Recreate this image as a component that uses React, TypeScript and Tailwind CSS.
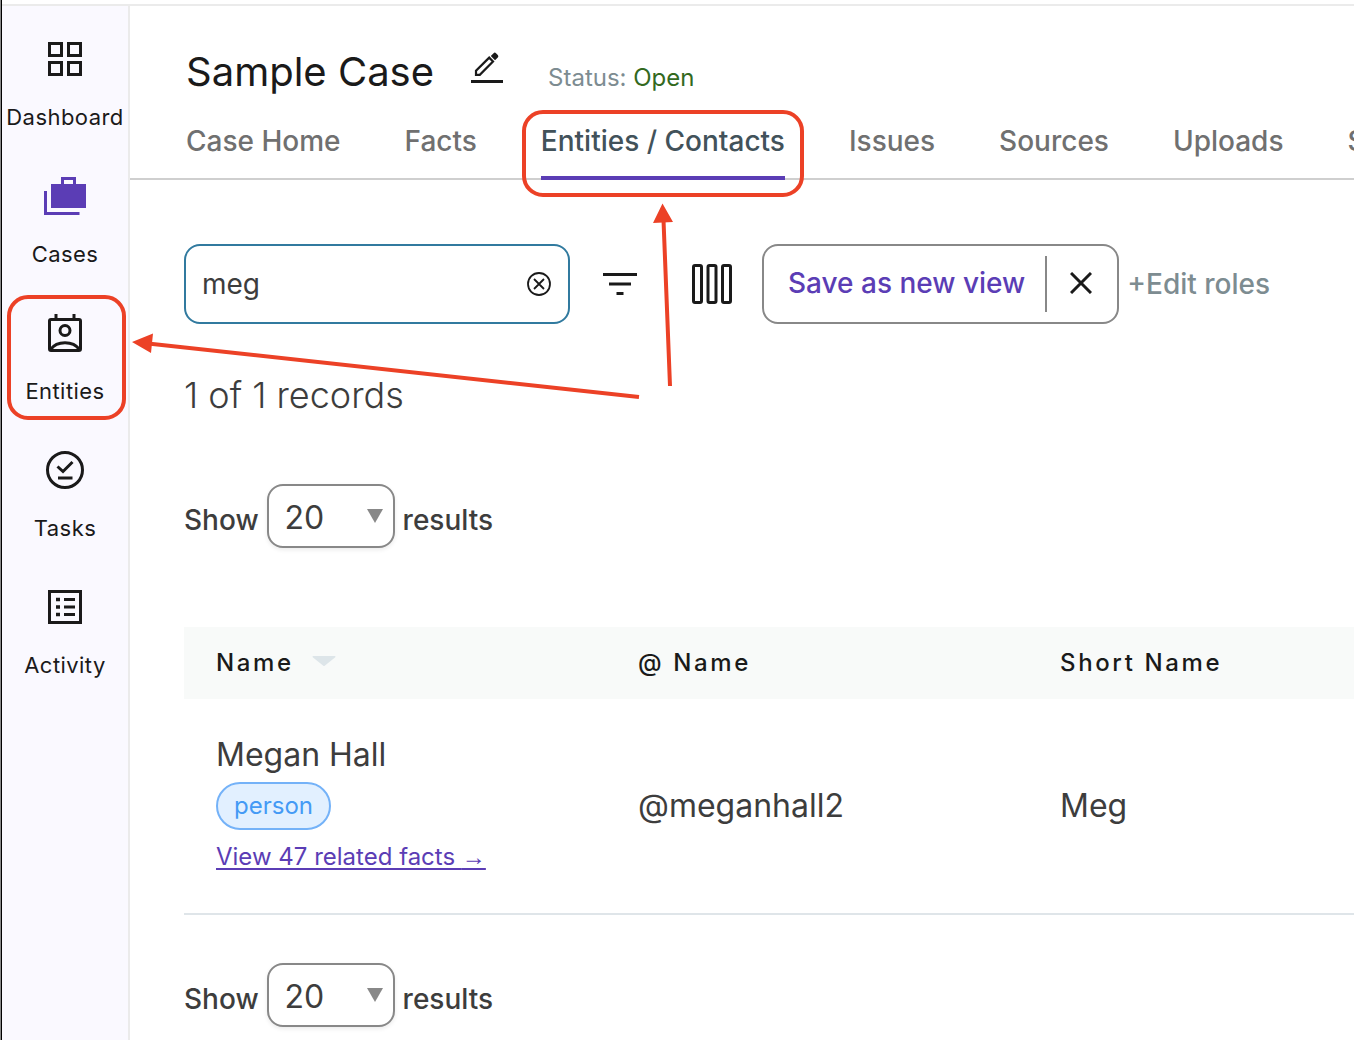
import React from "react";

const navItems = [
  { label: "Dashboard", icon: <DashboardIcon /> },
  { label: "Cases", icon: <CasesIcon /> },
  { label: "Entities", icon: <EntitiesIcon /> },
  { label: "Tasks", icon: <TasksIcon /> },
  { label: "Activity", icon: <ActivityIcon /> },
];

const tabs = ["Case Home", "Facts", "Entities / Contacts", "Issues", "Sources", "Uploads", "Settings"];

function DashboardIcon() {
  return (
    <svg width="48" height="48" viewBox="0 0 48 48" fill="none" stroke="currentColor" strokeWidth="3" aria-hidden="true">
      <rect x="8.500" y="8.500" width="12" height="12" />
      <rect x="27.500" y="8.500" width="12" height="12" />
      <rect x="8.500" y="27.500" width="12" height="12" />
      <rect x="27.500" y="27.500" width="12" height="12" />
    </svg>
  );
}

function CasesIcon() {
  return (
    <svg width="48" height="48" viewBox="0 0 48 48" fill="#5b3db5" aria-hidden="true">
      <path d="M3 19H6V40H38.500V43H3Z" />
      <path fillRule="evenodd" d="M10 12H20V5H35V12H45V36H10ZM23 8V12H32V8Z" />
    </svg>
  );
}

function EntitiesIcon() {
  return (
    <svg width="48" height="48" viewBox="0 0 48 48" fill="none" stroke="currentColor" strokeWidth="3" aria-hidden="true">
      <path d="M15 5V11M33 5V11" />
      <rect x="8.500" y="10.500" width="31" height="31" rx="1.500" />
      <circle cx="24" cy="21.500" r="5" />
      <path d="M9.500 40.500C16 31.500 32 31.500 38.500 40.500" />
    </svg>
  );
}

function TasksIcon() {
  return (
    <svg width="48" height="48" viewBox="0 0 48 48" fill="none" stroke="currentColor" strokeWidth="3" aria-hidden="true">
      <circle cx="24" cy="24" r="17.500" />
      <path d="M16.500 20.500L22 25.500L31.500 16M17 32H31.500" />
    </svg>
  );
}

function ActivityIcon() {
  return (
    <svg width="48" height="48" viewBox="0 0 48 48" fill="none" stroke="currentColor" strokeWidth="3" aria-hidden="true">
      <rect x="8.500" y="8.500" width="31" height="31" />
      <path d="M15 16.500H19M15 24H19M15 31.500H19" strokeWidth="3.600" />
      <path d="M23 16.500H34M23 24H34M23 31.500H34" />
    </svg>
  );
}

function PencilIcon() {
  return (
    <svg width="32" height="32" viewBox="0 0 32 32" aria-hidden="true">
      <path d="M0 28H32V31H0Z" fill="currentColor" />
      <path d="M5 22.800V18.800L18.200 5.600L22 9.400L8.800 22.800Z" fill="none" stroke="currentColor" strokeWidth="2.200" />
      <path d="M19.800 4L22.600 1.200Q23.800 0 25 1.200L26.800 3Q28 4.200 26.800 5.400L24 8.200Z" fill="currentColor" />
    </svg>
  );
}

function PageSize({ id }: { id: string }) {
  return (
    <div className="flex items-center gap-2 text-[28px] leading-10 font-medium text-[#3d3d3d]">
      <label htmlFor={id} className="pt-2">Show</label>
      <div className="relative">
        <select
          id={id}
          defaultValue="20"
          className="block h-16 w-32 appearance-none rounded-2xl border-2 border-[#888] bg-white pt-1 pl-4 text-[32px] font-normal shadow-[0_2px_4px_rgba(0,0,0,0.08)]"
        >
          <option>20</option>
          <option>50</option>
          <option>100</option>
        </select>
        <svg className="pointer-events-none absolute top-6 right-3" width="16" height="16" viewBox="0 0 16 16" aria-hidden="true">
          <path d="M0 1H16L8 15Z" fill="#888" />
        </svg>
      </div>
      <span className="pt-2">results</span>
    </div>
  );
}

function Annotations() {
  return (
    <svg className="pointer-events-none absolute top-0 left-0" width="820" height="440" viewBox="0 0 820 440" fill="none" stroke="#ec4126" strokeWidth="4" aria-hidden="true">
      <rect x="9" y="297" width="115" height="121" rx="19" />
      <rect x="524" y="112" width="278" height="83" rx="19" />
      <path d="M639 397L148 343.500M670 386L663.500 220" />
      <path d="M132 342L153 333.500L151 353ZM662.500 203.500L653 223L673 222Z" fill="#ec4126" stroke="none" />
    </svg>
  );
}

export default function App() {
  return (
    <div className="relative flex min-h-screen flex-col overflow-hidden bg-white font-['Inter',sans-serif] text-[#1a1a1a]">
      <div className="flex flex-1 border-l border-[#8a8a8a]">
        <div className="flex min-w-0 flex-1 flex-col border-l border-black">
          <div className="h-1.5 shrink-0 border-b-2 border-[#ebebeb]" />
          <div className="flex flex-1">
            <nav className="flex w-32 shrink-0 flex-col gap-10 border-r-2 border-[#ebebeb] bg-[#faf9ff] pt-[29px]">
              {navItems.map((item) => (
                <a key={item.label} href="#" className="flex flex-col items-center gap-5 text-[22px] leading-[29px] tracking-[0.02em]">
                  {item.icon}
                  <span>{item.label}</span>
                </a>
              ))}
            </nav>

            <main className="min-w-0 flex-1 overflow-hidden">
              <header className="border-b-2 border-[#cfcfcf] pl-14">
                <div className="flex items-center pt-[42px]">
                  <h1 className="text-[40px] leading-12">Sample Case</h1>
                  <button aria-label="Edit case name" className="-mt-2 ml-[37px]">
                    <PencilIcon />
                  </button>
                  <p className="ml-[45px] pt-3 text-2xl leading-8 text-[#7d8c91]">
                    Status: <span className="text-[#33691e]">Open</span>
                  </p>
                </div>
                <nav className="-mb-0.5 flex gap-16 pt-[25px] text-[28px] leading-10 font-medium whitespace-nowrap text-[#707070]">
                  {tabs.map((tab) => (
                    <a
                      key={tab}
                      href="#"
                      className={
                        tab === "Entities / Contacts"
                          ? "border-b-4 border-[#5b3db5] pb-[15px] text-[#42525a]"
                          : "border-b-4 border-transparent pb-[15px]"
                      }
                    >
                      {tab}
                    </a>
                  ))}
                </nav>
              </header>

              <div className="pl-[54px]">
                <div className="flex items-center pt-16">
                  <div className="relative w-[386px]">
                    <input
                      type="text"
                      aria-label="Search entities"
                      defaultValue="meg"
                      className="block h-20 w-full rounded-2xl border-2 border-[#317a9f] bg-white pr-14 pl-4 text-[28px] text-[#3d3d3d] outline-none"
                    />
                    <button aria-label="Clear search" className="absolute top-7 right-[18px]">
                      <svg width="26" height="24" viewBox="0 0 26 24" fill="none" stroke="currentColor" strokeWidth="1.800" aria-hidden="true">
                        <circle cx="13" cy="12" r="11" />
                        <path d="M8 7L18 17M18 7L8 17" />
                      </svg>
                    </button>
                  </div>
                  <button aria-label="Filter" className="ml-8">
                    <svg width="36" height="24" viewBox="0 0 36 24" fill="none" stroke="currentColor" strokeWidth="3" aria-hidden="true">
                      <path d="M1 2.500H35M7 12H29M14.500 21.500H21.500" />
                    </svg>
                  </button>
                  <button aria-label="Choose columns" className="ml-[54px]">
                    <svg width="40" height="40" viewBox="0 0 40 40" fill="none" stroke="currentColor" strokeWidth="3" aria-hidden="true">
                      <rect x="1.500" y="1.500" width="8" height="37" rx="1.500" />
                      <rect x="16" y="1.500" width="8" height="37" rx="1.500" />
                      <rect x="30.500" y="1.500" width="8" height="37" rx="1.500" />
                    </svg>
                  </button>
                  <div className="ml-[30px] flex h-20 items-center rounded-2xl border-2 border-[#888] pl-6">
                    <button className="pr-5 pb-0.5 text-[28px] leading-10 font-medium whitespace-nowrap text-[#5b3db5]">Save as new view</button>
                    <div className="h-14 w-0.5 bg-[#888]" />
                    <button aria-label="Discard view" className="pr-[25px] pb-0.5 pl-[23px]">
                      <svg width="22" height="22" viewBox="0 0 22 22" stroke="currentColor" strokeWidth="3" aria-hidden="true">
                        <path d="M1 1L21 21M21 1L1 21" />
                      </svg>
                    </button>
                  </div>
                  <button className="ml-2 text-[28px] leading-10 font-medium whitespace-nowrap text-[#7d8c91]">+Edit roles</button>
                </div>

                <p className="pt-[47px] text-[36px] leading-12 font-light text-[#3d3d3d]">1 of 1 records</p>

                <div className="pt-[65px]">
                  <PageSize id="page-size-top" />
                </div>

                <table className="mt-[79px] w-[1266px] table-fixed text-left text-[32px] leading-10 text-[#3d3d3d]">
                  <thead>
                    <tr className="h-[72px] bg-[#f8faf9] text-2xl tracking-[0.11em] text-[#1a1a1a]">
                      <th className="pl-8 font-medium">
                        <span className="flex items-center gap-[18px]">
                          Name
                          <svg className="mb-1" width="24" height="10" viewBox="0 0 24 10" aria-hidden="true">
                            <path d="M1 0H23Q24 0 23 1.500L13 9.500Q12 10.500 11 9.500L1 1.500Q0 0 1 0Z" fill="#dde5e9" />
                          </svg>
                        </span>
                      </th>
                      <th className="pl-8 font-medium">@ Name</th>
                      <th className="pl-8 font-medium">Short Name</th>
                    </tr>
                  </thead>
                  <tbody>
                    <tr className="border-b-2 border-[#dfe5e9]">
                      <td className="pt-9 pb-[38px] pl-8">
                        <div>Megan Hall</div>
                        <span className="mt-[7px] flex h-12 w-fit items-center rounded-full border-2 border-[#74b2f8] bg-[#e2f0ff] px-4 text-2xl text-[#449af5]">
                          person
                        </span>
                        <a href="#" className="mt-[9px] block text-2xl leading-9 text-[#5b3db5] underline decoration-2 underline-offset-[3px]">
                          View 47 related facts <span className="font-['Liberation_Sans',sans-serif]">→</span>
                        </a>
                      </td>
                      <td className="pl-8">@meganhall2</td>
                      <td className="pl-8">Meg</td>
                    </tr>
                  </tbody>
                </table>

                <div className="pt-12">
                  <PageSize id="page-size-bottom" />
                </div>
              </div>
            </main>
          </div>
        </div>
      </div>
      <Annotations />
    </div>
  );
}
